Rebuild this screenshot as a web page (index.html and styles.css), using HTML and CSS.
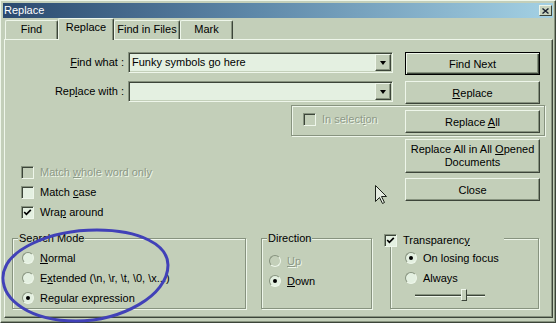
FILE: index.html
```html
<!doctype html>
<html lang="en">
<head>
    <meta charset="UTF-8">
    <title>Replace</title>
    <link rel="stylesheet" href="styles.css">
</head>
<body>
<div class="window">
    <div class="titlebar">
        <span class="title">Replace</span>
        <span class="close-btn">
            <svg width="7" height="6" viewBox="0 0 7 6"><path d="M0.5 0.5 L6.5 5.5 M6.5 0.5 L0.5 5.5" stroke="#1a2230" stroke-width="1.4"/></svg>
        </span>
    </div>
    <div class="tabs">
        <span class="tab tab-find">Find</span>
        <span class="tab tab-replace active">Replace</span>
        <span class="tab tab-files">Find in Files</span>
        <span class="tab tab-mark">Mark</span>
    </div>
    <div class="panel">
        <div class="row">
            <span class="field-label"><u>F</u>ind what :</span>
            <div class="combo">
                <span class="combo-text">Funky symbols go here</span>
                <span class="combo-arrow"><i></i></span>
            </div>
            <button class="btn btn-default">Find Next</button>
        </div>
        <div class="row">
            <span class="field-label">Rep<u>l</u>ace with :</span>
            <div class="combo">
                <span class="combo-text"></span>
                <span class="combo-arrow"><i></i></span>
            </div>
            <button class="btn"><u>R</u>eplace</button>
        </div>
        <div class="selection-group">
            <span class="check sel-check disabled"><span class="box"></span><span>In select<u>i</u>on</span></span>
            <button class="btn">Replace <u>A</u>ll</button>
        </div>
        <div class="middle">
            <div class="options">
                <span class="check disabled"><span class="box"></span><span>Match <u>w</u>hole word only</span></span>
                <span class="check"><span class="box"></span><span>Match <u>c</u>ase</span></span>
                <span class="check"><span class="box checked"><svg width="9" height="9" viewBox="0 0 9 9"><path d="M1.2 4 L3.4 6.3 L7.8 1.8" fill="none" stroke="#000" stroke-width="1.7"/></svg></span><span>Wra<u>p</u> around</span></span>
            </div>
            <div class="side-buttons">
                <button class="btn btn-tall">Replace All in All <u>O</u>pened<br>Documents</button>
                <button class="btn">Close</button>
            </div>
        </div>
        <div class="groups">
            <div class="group group-search">
                <span class="group-title">Search Mode</span>
                <span class="radio-row"><span class="radio"></span><span><u>N</u>ormal</span></span>
                <span class="radio-row"><span class="radio"></span><span>E<u>x</u>tended (\n, \r, \t, \0, \x...)</span></span>
                <span class="radio-row"><span class="radio on"></span><span>Regular expression</span></span>
            </div>
            <div class="group group-direction">
                <span class="group-title">Direction</span>
                <span class="radio-row disabled"><span class="radio"></span><span><u>U</u>p</span></span>
                <span class="radio-row"><span class="radio on"></span><span><u>D</u>own</span></span>
            </div>
            <div class="group group-transparency">
                <span class="group-title check"><span class="box checked"><svg width="9" height="9" viewBox="0 0 9 9"><path d="M1.2 4 L3.4 6.3 L7.8 1.8" fill="none" stroke="#000" stroke-width="1.7"/></svg></span><span>Transparenc<u>y</u></span></span>
                <span class="radio-row"><span class="radio on"></span><span>On losing focus</span></span>
                <span class="radio-row"><span class="radio"></span><span>Always</span></span>
                <div class="slider">
                    <span class="track"></span>
                    <span class="thumb"></span>
                </div>
            </div>
        </div>
    </div>
    <svg class="overlay" width="556" height="323" viewBox="0 0 556 323">
        <path d="M3 278 C3 250 50 230 97 230 C140 230 168 245 168 265 C168 296 121 321 76 321 C30 321 3 300 3 278 Z" fill="none" stroke="#4141b8" stroke-width="3"/>
        <path d="M375.5 185.5 L375.5 201.5 L379.5 197.5 L382.5 203.5 L384.5 202.5 L381.5 196.5 L386.5 196.5 Z" fill="#e4ebe0" stroke="#1c221a" stroke-width="1"/>
    </svg>
</div>
</body>
</html>
```

FILE: styles.css
```css
* {
    margin: 0;
    padding: 0;
    box-sizing: border-box;
}

body {
    background: #c3cfb9;
    font-family: "Liberation Sans", Arial, sans-serif;
    font-size: 11px;
    color: #000;
}

u {
    text-decoration: underline;
}

.window {
    position: relative;
    width: 556px;
    height: 323px;
    padding: 2px;
    background: #c3cfb9;
    border: 1px solid;
    border-color: #eef6ea #3c4539 #3c4539 #eef6ea;
    box-shadow: inset -1px -1px #87937f;
}

/* title bar */
.titlebar {
    display: flex;
    align-items: center;
    justify-content: space-between;
    height: 15px;
    padding: 0 1px 0 1px;
    background: linear-gradient(to right, #2b4a6f, #5d87a8 45%, #a4d1e4);
    color: #fff;
}

.title {
    line-height: 15px;
}

.close-btn {
    display: flex;
    align-items: center;
    justify-content: center;
    width: 13px;
    height: 11px;
    background: #c9d4bf;
    border: 1px solid;
    border-color: #eef6ea #3c4539 #3c4539 #eef6ea;
}

/* tabs */
.tabs {
    position: relative;
    z-index: 1;
    display: flex;
    align-items: flex-end;
    height: 21px;
    padding-left: 2px;
}

.tab {
    height: 19px;
    line-height: 17px;
    text-align: center;
    background: #c3cfb9;
    border: 1px solid;
    border-bottom: none;
    border-color: #eef6ea #3c4539 #3c4539 #eef6ea;
    border-radius: 2px 2px 0 0;
    box-shadow: inset -1px 0 #87937f;
}

.tab-find { width: 53px; }
.tab-replace { width: 56px; }
.tab-files { width: 66px; }
.tab-mark { width: 53px; }

.tab.active {
    height: 22px;
    margin-bottom: -1px;
    line-height: 17px;
}

/* panel */
.panel {
    height: 279px;
    margin-left: 1px;
    padding-top: 12px;
    border: 1px solid;
    border-color: #eef6ea #3c4539 #3c4539 #eef6ea;
    box-shadow: inset -1px -1px #87937f;
}

.row {
    display: flex;
    align-items: flex-start;
    height: 23px;
}

.row + .row {
    margin-top: 6px;
}

.field-label {
    width: 119px;
    line-height: 21px;
    text-align: right;
}

.combo {
    display: flex;
    width: 265px;
    height: 21px;
    margin-left: 4px;
    background: #e4f0e1;
    border: 1px solid;
    border-color: #87937f #eef6ea #eef6ea #87937f;
    box-shadow: inset 1px 1px #3c4539, inset -1px -1px #c3cfb9;
}

.combo-text {
    flex: 1;
    padding-left: 3px;
    line-height: 19px;
}

.combo-arrow {
    display: flex;
    align-items: center;
    justify-content: center;
    width: 16px;
    height: 17px;
    margin: 1px 1px 0 0;
    background: #c3cfb9;
    border: 1px solid;
    border-color: #eef6ea #3c4539 #3c4539 #eef6ea;
    box-shadow: inset -1px -1px #87937f;
}

.combo-arrow i {
    width: 0;
    height: 0;
    border-left: 3.5px solid transparent;
    border-right: 3.5px solid transparent;
    border-top: 4px solid #000;
}

.btn {
    width: 135px;
    height: 23px;
    font: inherit;
    color: #000;
    text-align: center;
    background: #c3cfb9;
    border: 1px solid;
    border-color: #eef6ea #3c4539 #3c4539 #eef6ea;
    box-shadow: inset -1px -1px #87937f;
}

.row .btn {
    margin-left: 12px;
}

.btn-default {
    border-color: #000;
    box-shadow: inset 1px 1px #eef6ea, inset -1px -1px #3c4539, inset -2px -2px #87937f;
}

.btn-tall {
    height: 34px;
    line-height: 13px;
}

/* in selection */
.selection-group {
    display: flex;
    align-items: flex-start;
    width: 254px;
    height: 31px;
    margin: 1px 0 0 286px;
    padding: 4px 4px 0 11px;
    border: 1px solid #87937f;
    box-shadow: inset 1px 1px #eef6ea, 1px 1px #eef6ea;
}

.sel-check {
    flex: 1;
    margin-top: 3px;
}

/* checkboxes */
.check {
    display: flex;
    align-items: center;
    height: 13px;
    line-height: 13px;
    white-space: pre;
}

.box {
    display: flex;
    align-items: center;
    justify-content: center;
    width: 13px;
    height: 13px;
    margin-right: 6px;
    background: #e4f0e1;
    border: 1px solid;
    border-color: #87937f #eef6ea #eef6ea #87937f;
    box-shadow: inset 1px 1px #3c4539;
}

.disabled {
    color: #8d9987;
    text-shadow: 1px 1px #eef6ea;
}

.disabled .box,
.disabled .radio {
    background: #c3cfb9;
}

.middle {
    display: flex;
}

.options {
    display: flex;
    flex-direction: column;
    gap: 7px;
    width: 400px;
    padding: 30px 0 0 16px;
}

.side-buttons {
    display: flex;
    flex-direction: column;
    gap: 5px;
    margin-top: 3px;
}

/* group boxes */
.groups {
    display: flex;
    align-items: flex-start;
    margin: 19px 0 0 7px;
}

.group {
    position: relative;
    display: flex;
    flex-direction: column;
    gap: 8px;
    height: 71px;
    border: 1px solid #87937f;
    box-shadow: inset 1px 1px #eef6ea, 1px 1px #eef6ea;
}

.group-title {
    position: absolute;
    top: -7px;
    left: 5px;
    padding: 0 1px;
    line-height: 13px;
    background: #c3cfb9;
}

.group-search {
    width: 234px;
    padding: 13px 0 0 9px;
}

.group-direction {
    width: 111px;
    margin-left: 15px;
    padding: 16px 0 0 7px;
}

.group-transparency {
    width: 149px;
    margin-left: 18px;
    padding: 13px 0 0 14px;
}

.group-transparency .group-title {
    top: -5px;
    left: -7px;
    width: 120px;
    height: 13px;
    padding: 0;
}

.radio-row {
    display: flex;
    align-items: center;
    height: 12px;
    line-height: 12px;
    white-space: pre;
}

.radio {
    display: flex;
    align-items: center;
    justify-content: center;
    width: 12px;
    height: 12px;
    margin-right: 6px;
    background: #e4f0e1;
    border: 1px solid;
    border-color: #87937f #eef6ea #eef6ea #87937f;
    border-radius: 50%;
}

.radio.on::after {
    content: "";
    width: 4px;
    height: 4px;
    background: #000;
    border-radius: 50%;
}

.slider {
    position: relative;
    display: flex;
    align-items: center;
    width: 70px;
    height: 12px;
    margin: -3px 0 0 10px;
}

.track {
    width: 100%;
    height: 3px;
    border-top: 1px solid #87937f;
    border-bottom: 1px solid #eef6ea;
    background: #3c4539;
}

.thumb {
    position: absolute;
    top: 0;
    left: 46px;
    width: 6px;
    height: 12px;
    background: #c3cfb9;
    border: 1px solid;
    border-color: #eef6ea #3c4539 #3c4539 #eef6ea;
}

.overlay {
    position: absolute;
    top: -1px;
    left: -1px;
    pointer-events: none;
}
```
